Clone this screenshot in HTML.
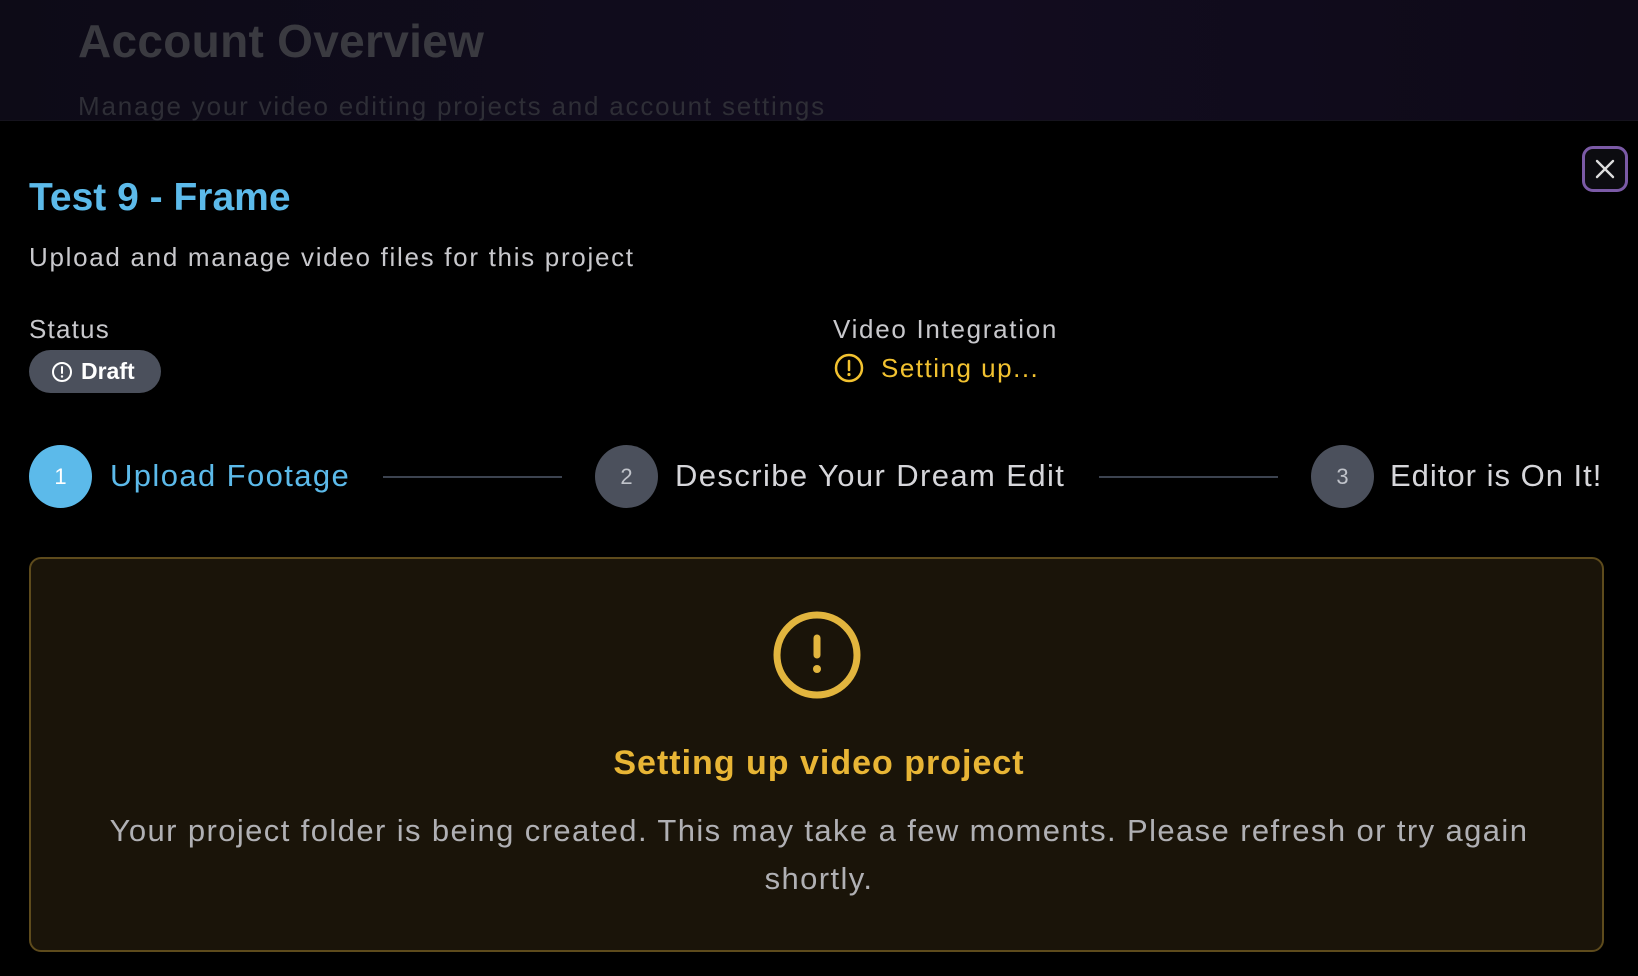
<!DOCTYPE html>
<html><head><meta charset="utf-8"><style>
*{margin:0;padding:0;box-sizing:border-box}
body{width:1638px;height:976px;background:#000;font-family:"Liberation Sans",sans-serif;position:relative;overflow:hidden}
.hdr{position:absolute;left:0;top:0;width:1638px;height:121px;background:linear-gradient(90deg,#0d0b17,#120c1f 60%,#0e0a18);border-bottom:1px solid #15131d}
.a{position:absolute;white-space:nowrap}
.circ{position:absolute;width:63px;height:63px;border-radius:50%;display:flex;align-items:center;justify-content:center;font-size:22px;top:445px}
.line{position:absolute;top:476px;height:2px;background:#3c4350}
</style></head><body>
<div class="hdr"></div>
<div class="a" style="left:78px;top:14px;font-size:46px;font-weight:bold;color:#3a3a40;letter-spacing:0.3px">Account Overview</div>
<div class="a" style="left:78px;top:91px;font-size:26px;color:#2e2e36;letter-spacing:1.8px">Manage your video editing projects and account settings</div>

<div class="a" style="left:1582px;top:146px;width:46px;height:46px;border:3px solid #7b5aa6;border-radius:11px;background:#0c0c10;display:flex;align-items:center;justify-content:center">
<svg width="22" height="22" viewBox="0 0 22 22"><path d="M3 3L19 19M19 3L3 19" stroke="#ddd" stroke-width="2.4" stroke-linecap="round"/></svg></div>

<div class="a" style="left:29px;top:176px;font-size:39px;font-weight:bold;color:#5cbaea">Test 9 - Frame</div>
<div class="a" style="left:29px;top:242px;font-size:26px;color:#c8c8cc;letter-spacing:1.7px">Upload and manage video files for this project</div>
<div class="a" style="left:29px;top:314px;font-size:26px;color:#c8c8cc;letter-spacing:1.2px">Status</div>
<div class="a" style="left:29px;top:350px;width:132px;height:43px;border-radius:22px;background:#4b505c;color:#fff;font-size:23px;font-weight:bold;display:flex;align-items:center;padding-left:22px">
<svg width="22" height="22" viewBox="0 0 22 22" style="margin-right:8px"><circle cx="11" cy="11" r="9" fill="none" stroke="#fff" stroke-width="2"/><path d="M11 6v6" stroke="#fff" stroke-width="2" stroke-linecap="round"/><circle cx="11" cy="15.5" r="1.2" fill="#fff"/></svg>Draft</div>
<div class="a" style="left:833px;top:314px;font-size:26px;color:#c8c8cc;letter-spacing:1.7px">Video Integration</div>
<div class="a" style="left:833px;top:352px;font-size:26px;color:#f2c230;display:flex;align-items:center;letter-spacing:1.5px">
<svg width="32" height="32" viewBox="0 0 32 32" style="margin-right:16px"><circle cx="16" cy="16" r="13" fill="none" stroke="#f2c230" stroke-width="2.5"/><path d="M16 9v9" stroke="#f2c230" stroke-width="2.5" stroke-linecap="round"/><circle cx="16" cy="22.5" r="1.6" fill="#f2c230"/></svg>Setting up...</div>

<div class="circ" style="left:29px;background:#5cbaea;color:#fff">1</div>
<div class="a" style="left:110px;top:458px;font-size:31px;color:#5cbaea;letter-spacing:1.4px">Upload Footage</div>
<div class="line" style="left:383px;width:179px"></div>
<div class="circ" style="left:595px;background:#4b505c;color:#c0c3ca">2</div>
<div class="a" style="left:675px;top:458px;font-size:31px;color:#d6d6da;letter-spacing:1.4px">Describe Your Dream Edit</div>
<div class="line" style="left:1099px;width:179px"></div>
<div class="circ" style="left:1311px;background:#4b505c;color:#c0c3ca">3</div>
<div class="a" style="left:1390px;top:458px;font-size:31px;color:#d6d6da;letter-spacing:1px">Editor is On It!</div>

<div class="a" style="left:29px;top:557px;width:1575px;height:395px;border:2px solid #5e4b1c;border-radius:12px;background:#1a1409"></div>
<svg class="a" style="left:771px;top:609px" width="92" height="92" viewBox="0 0 92 92"><circle cx="46" cy="46" r="40" fill="none" stroke="#e2b53e" stroke-width="7"/><path d="M46 29v17" stroke="#e2b53e" stroke-width="7" stroke-linecap="round"/><circle cx="46" cy="60" r="4" fill="#e2b53e"/></svg>
<div class="a" style="left:0;width:1638px;text-align:center;top:744px;font-size:34px;font-weight:bold;color:#e8b535;letter-spacing:1px">Setting up video project</div>
<div class="a" style="left:90px;width:1458px;text-align:center;top:807px;font-size:31px;line-height:48px;color:#b0b0b4;white-space:normal;letter-spacing:1.4px">Your project folder is being created. This may take a few moments. Please refresh or try again shortly.</div>
</body></html>
